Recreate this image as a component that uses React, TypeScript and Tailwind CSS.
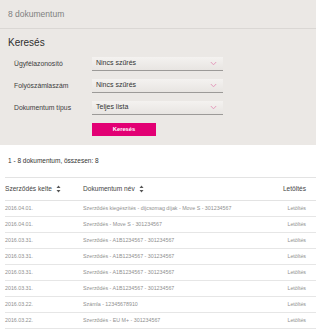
import React from "react";

const rows = [
  { date: "2016.04.01.", name: "Szerződés kiegészítés - díjcsomag díjak - Move S - 301234567" },
  { date: "2016.04.01.", name: "Szerződés - Move S - 301234567" },
  { date: "2016.03.31.", name: "Szerződés - A1B1234567 - 301234567" },
  { date: "2016.03.31.", name: "Szerződés - A1B1234567 - 301234567" },
  { date: "2016.03.31.", name: "Szerződés - A1B1234567 - 301234567" },
  { date: "2016.03.31.", name: "Szerződés - A1B1234567 - 301234567" },
  { date: "2016.03.22.", name: "Számla - 12345678910" },
  { date: "2016.03.22.", name: "Szerződés - EU M+ - 301234567" },
];

const filters = [
  { label: "Ügyfélazonosító", value: "Nincs szűrés" },
  { label: "Folyószámlaszám", value: "Nincs szűrés" },
  { label: "Dokumentum típus", value: "Teljes lista" },
];

const SortIcon = () => (
  <svg width="5" height="8" viewBox="0 0 5 8" className="ml-[4px]">
    <path d="M2.5 0.5 L4.5 3 L0.5 3 Z" fill="#555" />
    <path d="M2.5 7.5 L4.5 5 L0.5 5 Z" fill="#555" />
  </svg>
);

const Select = ({ value }: { value: string }) => (
  <div className="flex h-[14px] w-[131px] items-center justify-between border-b border-[#9c9a98] bg-gradient-to-b from-[#f4f2f0] to-[#e8e5e2] pl-[4px] pr-[6px]">
    <span className="text-[7px] font-medium text-[#333]">{value}</span>
    <svg width="7" height="5" viewBox="0 0 7 5">
      <path d="M0.8 1 L3.5 3.8 L6.2 1" fill="none" stroke="#e49abb" strokeWidth="1" />
    </svg>
  </div>
);

export default function App() {
  return (
    <div className="h-[332px] w-[316px] overflow-hidden bg-white font-['Liberation_Sans',sans-serif]">
      <div className="h-[145px] bg-[#ebe8e5]">
        <div className="flex h-[29px] items-center border-b border-[#dad7d4] pl-[8px] text-[8.5px] text-[#808080]">
          8 dokumentum
        </div>
        <div className="pl-[8px] pt-[7px]">
          <h2 className="h-[14px] text-[10px] leading-[14px] text-[#2e2e2e]">Keresés</h2>
          <div className="mt-[7px] flex flex-col gap-[8px]">
            {filters.map((f) => (
              <div key={f.label} className="flex items-center">
                <span className="w-[84px] pl-[6px] text-[6.8px] text-[#3d3d3d]">{f.label}</span>
                <Select value={f.value} />
              </div>
            ))}
            <div className="pl-[84px]">
              <button className="flex h-[13px] w-[64px] items-center justify-center bg-[#e20074] text-[5.8px] font-bold text-white">
                Keresés
              </button>
            </div>
          </div>
        </div>
      </div>

      <div className="flex h-[32px] items-center pl-[8px] text-[6.5px] text-[#333]">
        1 - 8 dokumentum, összesen: 8
      </div>

      <div className="pl-[5px]">
        <div className="flex h-[24px] items-center border-y border-[#e3e3e3] text-[6.6px] text-[#444]">
          <div className="flex w-[78px] items-center">
            Szerződés kelte
            <SortIcon />
          </div>
          <div className="flex flex-1 items-center">
            Dokumentum név
            <SortIcon />
          </div>
          <div className="pr-[10px]">Letöltés</div>
        </div>
        {rows.map((r, i) => (
          <div
            key={i}
            className="flex h-[16px] items-center border-b border-[#e6e6e6] text-[5.3px] text-[#909090]"
          >
            <div className="w-[78px]">{r.date}</div>
            <div className="flex-1">{r.name}</div>
            <div className="pr-[10px]">Letöltés</div>
          </div>
        ))}
      </div>
    </div>
  );
}
